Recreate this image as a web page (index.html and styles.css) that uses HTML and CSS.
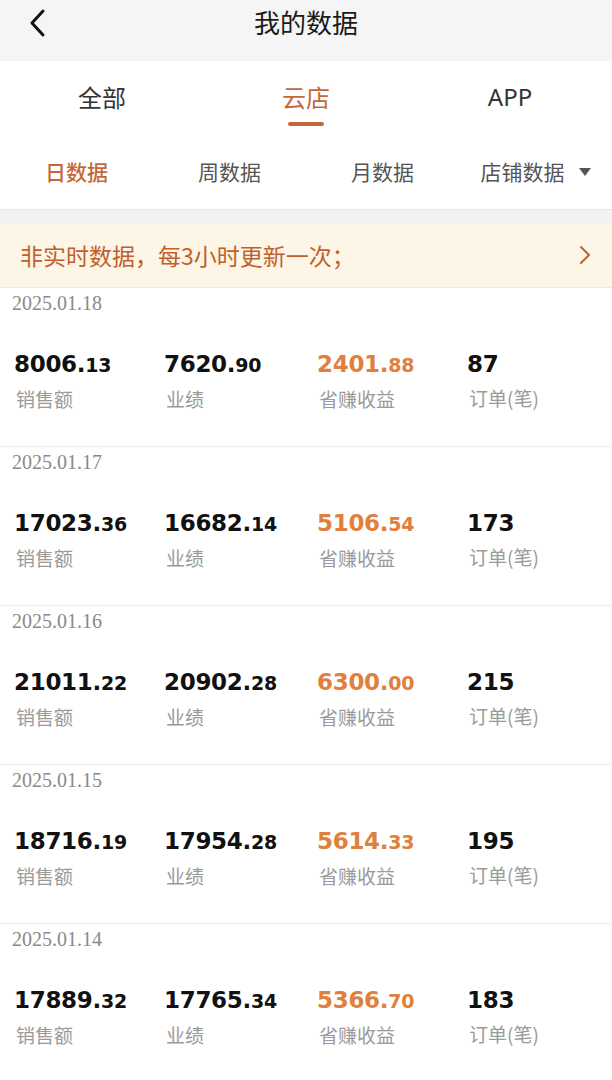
FILE: index.html
```html
<!DOCTYPE html>
<html lang="zh-CN">
<head>
<meta charset="utf-8">
<title>我的数据</title>
<link rel="stylesheet" href="styles.css">
</head>
<body>
<div class="page">
  <header class="topbar">
    <span class="back">
      <svg width="20" height="30" viewBox="0 0 20 30"><polyline points="15,3 4,15 15,27" fill="none" stroke="#111" stroke-width="3" stroke-linecap="round" stroke-linejoin="round"/></svg>
    </span>
    <h1 class="title">我的数据</h1>
  </header>

  <nav class="tabs">
    <div class="tab">全部</div>
    <div class="tab active">云店<span class="bar"></span></div>
    <div class="tab latin">APP</div>
  </nav>

  <nav class="subtabs">
    <div class="subtab active">日数据</div>
    <div class="subtab">周数据</div>
    <div class="subtab">月数据</div>
    <div class="subtab">店铺数据<span class="caret"></span></div>
  </nav>

  <div class="gap"></div>

  <div class="notice">
    <span class="notice-text">非实时数据，每3小时更新一次；</span>
    <svg class="notice-arrow" width="14" height="22" viewBox="0 0 14 22"><polyline points="3,3 11,11 3,19" fill="none" stroke="#b9653a" stroke-width="2" stroke-linecap="round" stroke-linejoin="round"/></svg>
  </div>

  <section class="list">
    <div class="card">
      <div class="date">2025.01.18</div>
      <div class="stats">
        <div class="stat"><div class="num">8006.<small>13</small></div><div class="label">销售额</div></div>
        <div class="stat"><div class="num">7620.<small>90</small></div><div class="label">业绩</div></div>
        <div class="stat"><div class="num orange">2401.<small>88</small></div><div class="label">省赚收益</div></div>
        <div class="stat"><div class="num">87</div><div class="label">订单(笔)</div></div>
      </div>
    </div>
    <div class="card">
      <div class="date">2025.01.17</div>
      <div class="stats">
        <div class="stat"><div class="num">17023.<small>36</small></div><div class="label">销售额</div></div>
        <div class="stat"><div class="num">16682.<small>14</small></div><div class="label">业绩</div></div>
        <div class="stat"><div class="num orange">5106.<small>54</small></div><div class="label">省赚收益</div></div>
        <div class="stat"><div class="num">173</div><div class="label">订单(笔)</div></div>
      </div>
    </div>
    <div class="card">
      <div class="date">2025.01.16</div>
      <div class="stats">
        <div class="stat"><div class="num">21011.<small>22</small></div><div class="label">销售额</div></div>
        <div class="stat"><div class="num">20902.<small>28</small></div><div class="label">业绩</div></div>
        <div class="stat"><div class="num orange">6300.<small>00</small></div><div class="label">省赚收益</div></div>
        <div class="stat"><div class="num">215</div><div class="label">订单(笔)</div></div>
      </div>
    </div>
    <div class="card">
      <div class="date">2025.01.15</div>
      <div class="stats">
        <div class="stat"><div class="num">18716.<small>19</small></div><div class="label">销售额</div></div>
        <div class="stat"><div class="num">17954.<small>28</small></div><div class="label">业绩</div></div>
        <div class="stat"><div class="num orange">5614.<small>33</small></div><div class="label">省赚收益</div></div>
        <div class="stat"><div class="num">195</div><div class="label">订单(笔)</div></div>
      </div>
    </div>
    <div class="card">
      <div class="date">2025.01.14</div>
      <div class="stats">
        <div class="stat"><div class="num">17889.<small>32</small></div><div class="label">销售额</div></div>
        <div class="stat"><div class="num">17765.<small>34</small></div><div class="label">业绩</div></div>
        <div class="stat"><div class="num orange">5366.<small>70</small></div><div class="label">省赚收益</div></div>
        <div class="stat"><div class="num">183</div><div class="label">订单(笔)</div></div>
      </div>
    </div>
  </section>
</div>
</body>
</html>
```

FILE: styles.css
```css
* { box-sizing: border-box; margin: 0; padding: 0; }
html, body { background: #ffffff; }
body {
  font-family: "Noto Sans CJK SC", "Noto Sans", sans-serif;
  color: #222;
  width: 612px;
  height: 1080px;
  overflow: hidden;
}
.page { width: 612px; }

.topbar {
  height: 61px;
  background: #f5f5f5;
  display: flex;
  align-items: center;
  justify-content: center;
  position: relative;
}
.back {
  position: absolute;
  left: 28px;
  top: 8px;
  width: 20px;
  height: 30px;
  display: flex;
}
.title {
  font-size: 26px;
  font-weight: 400;
  color: #1a1a1a;
  line-height: 30px;
  margin-top: -18px;
}

.tabs {
  display: grid;
  grid-template-columns: 204px 204px 204px;
  height: 70px;
  padding-top: 21px;
}
.tab {
  font-size: 24px;
  line-height: 30px;
  text-align: center;
  color: #333;
  position: relative;
}
.tab.latin { font-family: "Noto Sans", sans-serif; font-size: 24px; }
.tab.active { color: #c4683a; }
.tab .bar {
  position: absolute;
  left: 50%;
  top: 40px;
  width: 36px;
  height: 4px;
  margin-left: -18px;
  background: #c4683a;
  border-radius: 2px;
}

.subtabs {
  display: grid;
  grid-template-columns: 153px 153px 153px 153px;
  height: 78px;
  padding-top: 25px;
}
.subtab {
  font-size: 21px;
  line-height: 30px;
  text-align: center;
  color: #555;
  display: flex;
  justify-content: center;
  align-items: flex-start;
}
.subtab.active { color: #c4683a; font-weight: 500; }
.caret {
  display: inline-block;
  width: 0;
  height: 0;
  margin-left: 14px;
  margin-top: 12px;
  border-left: 6px solid transparent;
  border-right: 6px solid transparent;
  border-top: 8px solid #555;
}

.gap {
  height: 14px;
  background: #f2f2f2;
  border-top: 1px solid #e6e6e6;
}

.notice {
  height: 65px;
  background: #fdf5e5;
  display: flex;
  align-items: center;
  justify-content: space-between;
  padding: 0 20px 0 20px;
  border-bottom: 1px solid #f1eadb;
}
.notice-text {
  font-size: 23px;
  color: #c0602e;
}

.card {
  height: 159px;
  border-bottom: 1px solid #eeeeee;
  padding: 3px 0 0 12px;
}
.date {
  font-family: "Liberation Serif", serif;
  font-size: 20px;
  line-height: 24px;
  color: #8a8a8a;
}
.stats {
  display: grid;
  grid-template-columns: 150px 153px 150px 1fr;
  margin-top: 34px;
}
.stat { padding-left: 2px; }
.num {
  font-family: "DejaVu Sans", sans-serif;
  font-weight: 700;
  font-size: 23px;
  line-height: 30px;
  color: #111;
  letter-spacing: -0.3px;
}
.num small { font-size: 19px; }
.num.orange { color: #e0803c; }
.label {
  font-size: 19px;
  line-height: 26px;
  color: #9a9a9a;
  margin-top: 6px;
  padding-left: 2px;
}
```
